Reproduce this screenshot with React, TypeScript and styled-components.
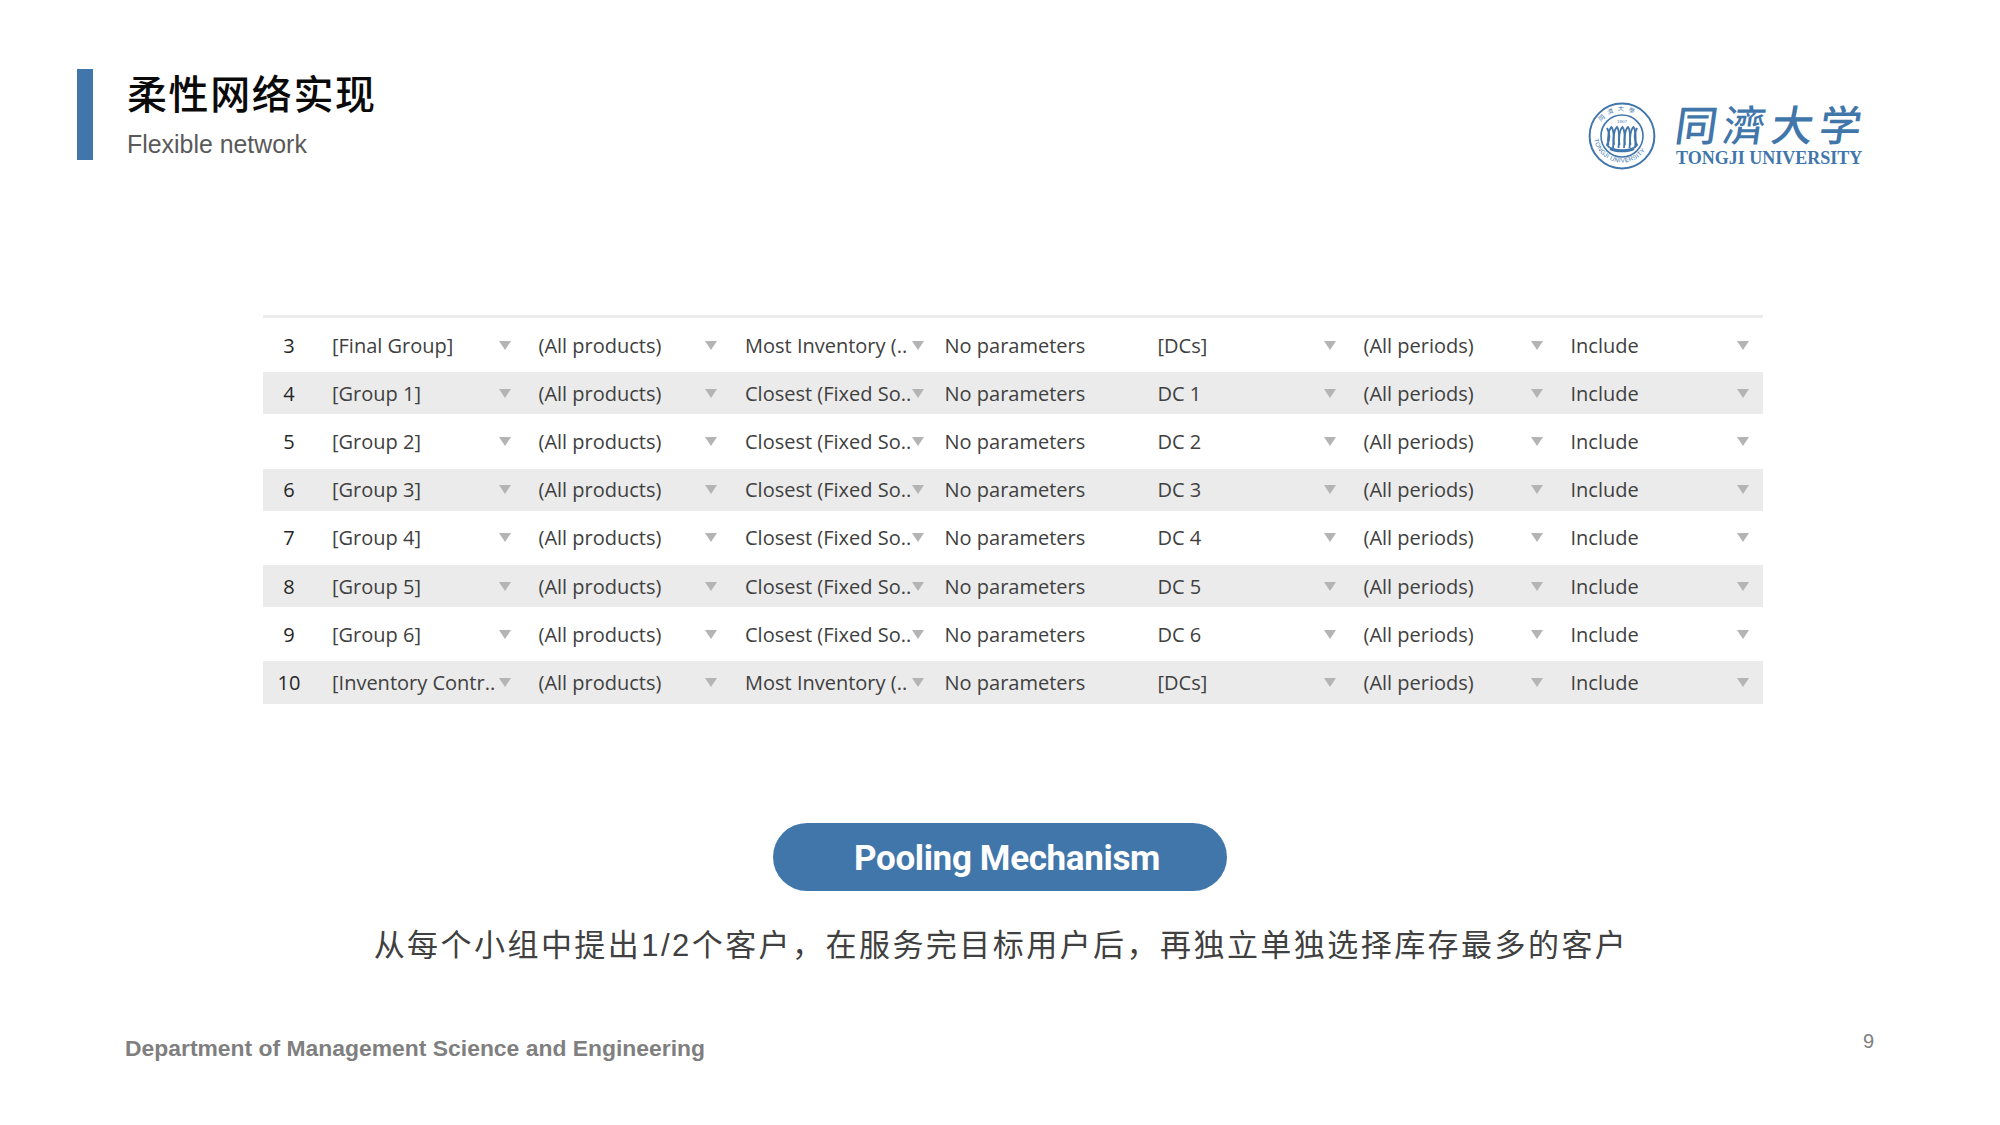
import React from "react";
import styled, { createGlobalStyle } from "styled-components";

const Global = createGlobalStyle`
  html, body { margin: 0; padding: 0; background: #fff; }
  #root { width: 2000px; height: 1125px; overflow: hidden; }
`;

const CJK = `"Liberation Sans", "Noto Sans CJK SC", sans-serif`;
const BLUE = "#4176ab";

const Page = styled.div`
  width: 2000px;
  height: 1125px;
  display: flex;
  flex-direction: column;
  background: #fff;
  font-family: ${CJK};
`;

const Header = styled.header`
  height: 315px;
  padding: 69px 132px 0 77px;
  box-sizing: border-box;
  display: flex;
  justify-content: space-between;
  align-items: flex-start;
  flex: none;
`;

const TitleBlock = styled.div`
  height: 91px;
  display: flex;
  gap: 34px;
`;

const AccentBar = styled.div`
  width: 16px;
  background: ${BLUE};
`;

const TitleText = styled.div`
  display: flex;
  flex-direction: column;
  padding-top: 1px;
`;

const Title = styled.h1`
  margin: 0;
  font-size: 40px;
  line-height: 50px;
  font-weight: 500;
  letter-spacing: 1.6px;
  color: #0a0a0a;
`;

const Subtitle = styled.div`
  margin-top: 8px;
  font-size: 24.9px;
  line-height: 32px;
  color: #595959;
`;

const Logo = styled.div`
  margin-top: 33px;
  display: flex;
  gap: 20px;
  align-items: flex-start;
`;

const Wordmark = styled.div`
  display: flex;
  flex-direction: column;
  align-items: flex-start;
  margin-top: -7px;
`;

const Calligraphy = styled.div`
  font-family: "Noto Sans CJK TC", sans-serif;
  font-size: 42px;
  line-height: 55px;
  font-weight: 500;
  letter-spacing: 6px;
  white-space: nowrap;
  color: ${BLUE};
  transform: skewX(-8deg);
`;

const LogoLatin = styled.div`
  font-family: "Liberation Serif", serif;
  font-weight: 700;
  font-size: 18px;
  line-height: 20px;
  margin-top: -2px;
  white-space: nowrap;
  color: ${BLUE};
`;

const Table = styled.section`
  width: 1500px;
  margin-left: 263px;
  flex: none;
  padding-top: 6px;
  border-top: 3px solid #ececec;
  display: flex;
  flex-direction: column;
  gap: 6px;
`;

const Row = styled.div<{ $shade: boolean }>`
  height: 42.2px;
  display: grid;
  grid-template-columns: 69px 206.5px 206.5px 199.5px 213px 206px 207px 193px;
  align-items: center;
  background: ${(p) => (p.$shade ? "#ebebeb" : "transparent")};
  font-family: "Open Sans", sans-serif;
  font-size: 20px;
  color: #404040;
`;

const Num = styled.div`
  width: 52px;
  text-align: center;
  color: #262626;
`;

const Select = styled.div<{ $end?: number }>`
  display: flex;
  align-items: center;
  justify-content: space-between;
  padding-right: ${(p) => p.$end ?? 28}px;
  white-space: nowrap;
`;

const Arrow = styled.span`
  flex: none;
  width: 0;
  height: 0;
  border-left: 6px solid transparent;
  border-right: 6px solid transparent;
  border-top: 9px solid #b4b4b4;
`;

const Plain = styled.div`
  white-space: nowrap;
`;

const Pooling = styled.div`
  align-self: center;
  margin-top: 119px;
  width: 454px;
  height: 68px;
  border-radius: 34px;
  background: ${BLUE};
  color: #fff;
  display: flex;
  align-items: center;
  justify-content: center;
  font-family: Roboto, sans-serif;
  font-weight: 700;
  font-size: 35px;
  letter-spacing: -0.35px;
  padding: 3px 0 0 14px;
  box-sizing: border-box;
`;

const Explain = styled.p`
  margin: 33px 0 0;
  padding-left: 2px;
  text-align: center;
  font-size: 31px;
  line-height: 44px;
  letter-spacing: 2.45px;
  color: #404040;
  white-space: nowrap;
`;

const Footer = styled.footer`
  margin-top: 65px;
  padding: 0 126px 0 125px;
  display: flex;
  justify-content: space-between;
  align-items: flex-start;
`;

const Dept = styled.div`
  font-weight: 700;
  font-size: 22.9px;
  line-height: 30px;
  color: #7f7f7f;
`;

const PageNo = styled.div`
  font-size: 20px;
  line-height: 24px;
  margin-top: -4px;
  color: #7f7f7f;
`;

type R = [string, string, string, string];
const rows: R[] = [
  ["3", "[Final Group]", "Most Inventory (..", "[DCs]"],
  ["4", "[Group 1]", "Closest (Fixed So..", "DC 1"],
  ["5", "[Group 2]", "Closest (Fixed So..", "DC 2"],
  ["6", "[Group 3]", "Closest (Fixed So..", "DC 3"],
  ["7", "[Group 4]", "Closest (Fixed So..", "DC 4"],
  ["8", "[Group 5]", "Closest (Fixed So..", "DC 5"],
  ["9", "[Group 6]", "Closest (Fixed So..", "DC 6"],
  ["10", "[Inventory Contr..", "Most Inventory (..", "[DCs]"],
];

function Seal() {
  const loops = [-11, -5.5, 0, 5.5, 11];
  return (
    <svg width="68" height="68" viewBox="0 0 68 68" aria-hidden="true">
      <defs>
        <path id="seal-top" d="M9 34 A25 25 0 0 1 59 34" />
        <path id="seal-bottom" d="M5.5 32 A28.5 28.5 0 0 0 62.5 32" />
      </defs>
      <circle cx="34" cy="34" r="32.4" fill="none" stroke={BLUE} strokeWidth="2" />
      <circle cx="34" cy="34" r="21" fill="none" stroke={BLUE} strokeWidth="1.6" />
      <text fontFamily="Noto Sans CJK TC, sans-serif" fontSize="6" fill={BLUE} letterSpacing="4">
        <textPath href="#seal-top" startOffset="19%">同濟大學</textPath>
      </text>
      <text fontFamily="Liberation Sans, sans-serif" fontSize="6.2" fill={BLUE} letterSpacing="0.3">
        <textPath href="#seal-bottom" startOffset="6%">TONGJI UNIVERSITY</textPath>
      </text>
      <text x="34" y="21" textAnchor="middle" fontFamily="Liberation Sans, sans-serif" fontSize="4.4" fill={BLUE}>1907</text>
      <path d="M19 26 C22 31 22 38 19 43 C24 50 44 50 49 43 C46 38 46 31 49 26" fill="none" stroke={BLUE} strokeWidth="2" />
      {loops.map((dx) => (
        <path
          key={dx}
          d={`M${34 + dx - 2.5} 43 C${34 + dx - 4} 36 ${34 + dx - 2} 27 ${34 + dx + 0.5} 25 C${34 + dx + 3} 28 ${34 + dx + 3} 37 ${34 + dx + 2} 46`}
          fill="none"
          stroke={BLUE}
          strokeWidth="1.8"
        />
      ))}
      <path d="M22 47 C28 50 40 50 46 47" fill="none" stroke={BLUE} strokeWidth="2" />
    </svg>
  );
}

export default function App() {
  return (
    <Page>
      <Global />
      <Header>
        <TitleBlock>
          <AccentBar />
          <TitleText>
            <Title>柔性网络实现</Title>
            <Subtitle>Flexible network</Subtitle>
          </TitleText>
        </TitleBlock>
        <Logo>
          <Seal />
          <Wordmark>
            <Calligraphy>同濟大学</Calligraphy>
            <LogoLatin>TONGJI UNIVERSITY</LogoLatin>
          </Wordmark>
        </Logo>
      </Header>
      <Table>
        {rows.map(([n, group, policy, dc], i) => (
          <Row key={n} $shade={i % 2 === 1}>
            <Num>{n}</Num>
            <Select><span>{group}</span><Arrow /></Select>
            <Select><span>(All products)</span><Arrow /></Select>
            <Select $end={21}><span>{policy}</span><Arrow /></Select>
            <Plain>No parameters</Plain>
            <Select><span>{dc}</span><Arrow /></Select>
            <Select><span>(All periods)</span><Arrow /></Select>
            <Select $end={15}><span>Include</span><Arrow /></Select>
          </Row>
        ))}
      </Table>
      <Pooling>Pooling Mechanism</Pooling>
      <Explain>从每个小组中提出1/2个客户，在服务完目标用户后，再独立单独选择库存最多的客户</Explain>
      <Footer>
        <Dept>Department of Management Science and Engineering</Dept>
        <PageNo>9</PageNo>
      </Footer>
    </Page>
  );
}
